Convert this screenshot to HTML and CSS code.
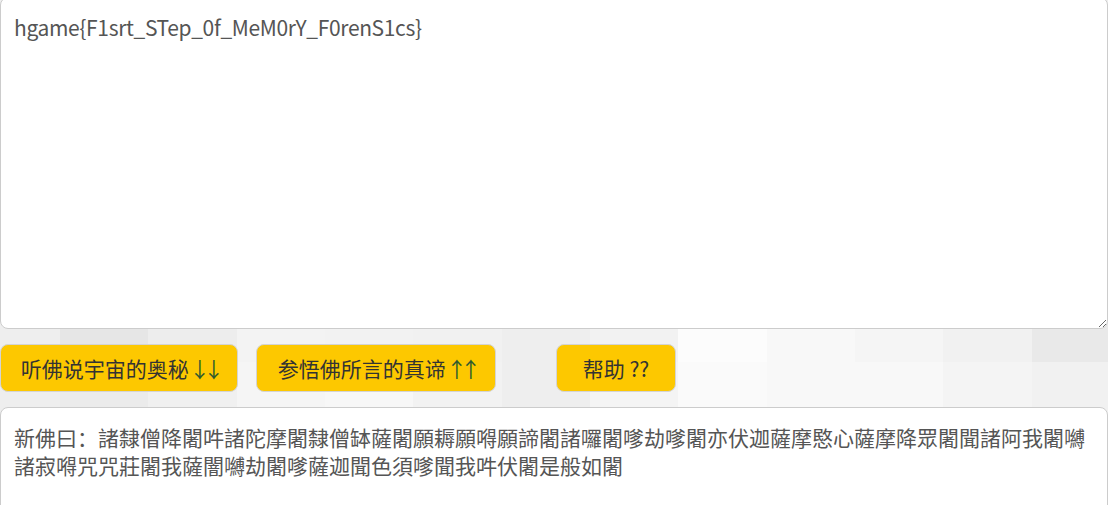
FILE: index.html
```html
<!DOCTYPE html>
<html lang="zh-CN">
<head>
<meta charset="utf-8">
<title>与佛论禅</title>
<link rel="stylesheet" href="styles.css">
</head>
<body>
<div class="page">
  <textarea class="box box-top">hgame{F1srt_STep_0f_MeM0rY_F0renS1cs}</textarea>
  <div class="actions">
    <button class="btn btn-arrowed btn-listen">听佛说宇宙的奥秘 <span class="arrow">↓↓</span></button>
    <button class="btn btn-arrowed btn-ponder">参悟佛所言的真谛 <span class="arrow">↑↑</span></button>
    <button class="btn btn-help">帮助 ??</button>
  </div>
  <textarea class="box box-bottom">新佛曰：諸隸僧降闍吽諸陀摩闍隸僧缽薩闍願耨願嘚願諦闍諸囉闍嗲劫嗲闍亦伏迦薩摩愍心薩摩降眾闍聞諸阿我闍嚩諸寂嘚咒咒莊闍我薩闇嚩劫闍嗲薩迦聞色須嗲聞我吽伏闍是般如闍</textarea>
</div>
</body>
</html>
```

FILE: styles.css
```css
* {
  box-sizing: border-box;
}

html, body {
  margin: 0;
  padding: 0;
}

body {
  background: #efefef;
}

.page {
  min-height: 505px;
  overflow: hidden;
  background-color: #efefef;
  background-image:
    linear-gradient(to right,
      #eeeeee 0 88px, #e6e6e6 88px 176px, #ededed 176px 265px,
      #f3f3f3 265px 353px, #f2f2f2 353px 441px, #f1f1f1 441px 530px,
      #eeeeee 530px 618px, #f2f2f2 618px 706px, #fcfcfc 706px 795px,
      #f8f8f8 795px 883px, #f5f5f5 883px 971px, #f1f1f1 971px 1060px,
      #e9e9e9 1060px 1148px),
    linear-gradient(to right,
      #eeeeee 0 88px, #ebebeb 88px 176px, #f0f0f0 176px 265px,
      #f5f5f5 265px 353px, #f7f7f7 353px 441px, #f2f2f2 441px 530px,
      #eeeeee 530px 618px, #f4f4f4 618px 706px, #fafafa 706px 795px,
      #f8f8f8 795px 883px, #f8f8f8 883px 971px, #f4f4f4 971px 1060px,
      #f1f1f1 1060px 1148px);
  background-size: 1148px 88px, 1148px 88px;
  background-position: -28px 274px, -28px 362px;
  background-repeat: no-repeat;
}

.box {
  display: block;
  width: 1108px;
  margin: 0;
  padding: 15px 13px 12px;
  border: 1px solid #cccccc;
  border-radius: 8px;
  background: #ffffff;
  color: #555555;
  font-family: "Noto Sans CJK SC", "Noto Sans", sans-serif;
  font-size: 21px;
  line-height: 28px;
  font-weight: 400;
  outline: none;
}

.box-top {
  height: 332px;
  margin-top: -3px;
  letter-spacing: -0.35px;
}

.box-bottom {
  height: 200px;
}

.actions {
  display: flex;
  align-items: center;
  gap: 18px;
  padding: 15px 0;
}

.btn {
  height: 48px;
  padding: 0;
  border: 1px solid #d4d4d4;
  border-radius: 8px;
  background: #fdc800;
  color: #333333;
  font-family: "Noto Sans CJK SC", "Noto Sans", sans-serif;
  font-size: 21px;
  line-height: 28px;
  text-align: center;
  white-space: nowrap;
  cursor: pointer;
}

.btn-arrowed {
  word-spacing: -4px;
}

.btn-listen {
  width: 238px;
}

.btn-ponder {
  width: 240px;
}

.btn-help {
  width: 120px;
  margin-left: 42px;
}

.arrow {
  letter-spacing: -7px;
  color: #2f5a2f;
}
```
